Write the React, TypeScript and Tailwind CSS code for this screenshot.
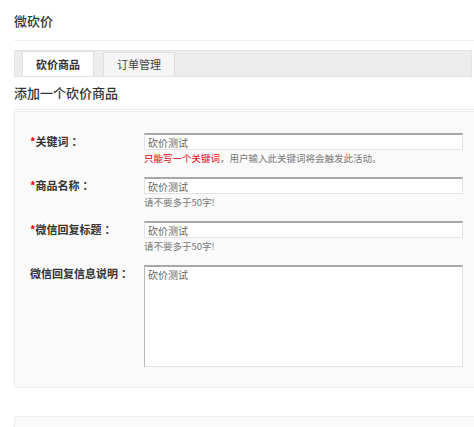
import React from "react";

const font = {
  fontFamily: '"Microsoft YaHei", "Noto Sans CJK SC", "Noto Sans", sans-serif',
};

const FormRow = ({
  label,
  required,
  value,
  hint,
}: {
  label: string;
  required?: boolean;
  value: string;
  hint?: React.ReactNode;
}) => {
  return (
    <div className="flex items-start h-[44px]">
      {/* Label */}
      <div className="w-[114px] h-[17px] flex items-center text-[11px] font-bold text-[#333]">
        {required && <span className="text-[#e60012]">*</span>}
        <span>{label}</span>
        <span className="ml-[3px]">：</span>
      </div>

      {/* Field */}
      <div className="flex flex-col">
        <div className="w-[319px] h-[17px] bg-white border border-[#e3e3e3] border-t-[#a8a8a8] border-t-2 flex items-center px-[3px] text-[10px] text-[#666]">
          {value}
        </div>
        {hint && <p className="text-[9.5px] leading-[16px] text-[#777]">{hint}</p>}
      </div>
    </div>
  );
};

export default function App() {
  return (
    <div className="w-[474px] h-[427px] bg-white overflow-hidden" style={font}>
      {/* Page title */}
      <div className="ml-[14px] h-[41px] flex items-center border-b border-[#f0f0f0]">
        <p className="text-[13px] font-medium text-[#333] pt-[2px]">微砍价</p>
      </div>

      <div className="pl-[14px]">
        {/* Tabs */}
        <div className="mt-[9px] mr-[2px] h-[27px] bg-[#ececec] border border-[#e4e4e4] flex items-end pl-[7px] gap-[9px]">
          <div className="w-[72px] h-[25px] bg-white border border-b-0 border-[#e0e0e0] flex items-center justify-center text-[11px] font-bold text-[#333]">
            砍价商品
          </div>
          <div className="w-[72px] h-[24px] bg-[#f5f5f5] border border-b-0 border-[#e0e0e0] flex items-center justify-center text-[11px] text-[#444]">
            订单管理
          </div>
        </div>

        {/* Section heading */}
        <div className="h-[33px] flex items-center border-b border-[#eee]">
          <p className="text-[13px] font-medium text-[#333]">添加一个砍价商品</p>
        </div>

        {/* Form panel */}
        <div className="mt-[1px] w-[470px] h-[277px] bg-[#fafafa] border border-[#efefef] pt-[21px] pl-[15px]">
          <FormRow
            label="关键词"
            required
            value="砍价测试"
            hint={
              <>
                <span className="text-[#e60012]">只能写一个关键词</span>，用户输入此关键词将会触发此活动。
              </>
            }
          />
          <FormRow label="商品名称" required value="砍价测试" hint="请不要多于50字!" />
          <FormRow label="微信回复标题" required value="砍价测试" hint="请不要多于50字!" />

          <div className="flex items-start">
            <div className="w-[114px] h-[17px] flex items-center text-[11px] font-bold text-[#333]">
              <span>微信回复信息说明</span>
              <span className="ml-[3px]">：</span>
            </div>
            <div className="w-[319px] h-[102px] bg-white border border-[#e3e3e3] border-t-[#a8a8a8] border-l-[#b8b8b8] border-t-2 px-[3px] text-[10px] text-[#666]">
              砍价测试
            </div>
          </div>
        </div>

        {/* Next panel */}
        <div className="mt-[28px] w-[470px] h-[20px] bg-[#fafafa] border border-[#efefef]" />
      </div>
    </div>
  );
}
